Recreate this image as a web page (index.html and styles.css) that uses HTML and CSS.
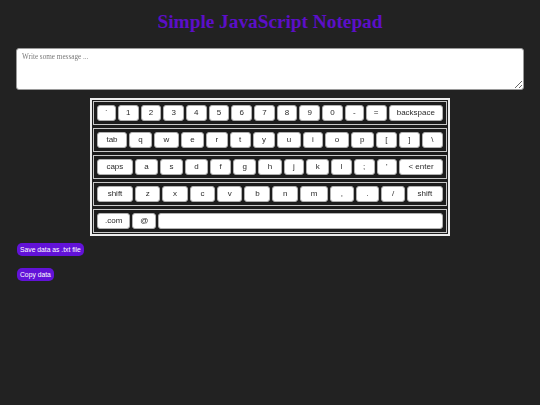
FILE: index.html
```html
<!DOCTYPE html>
<html lang="en">
<head>
<meta charset="utf-8">
<title>Simple JavaScript Notepad</title>
<link rel="stylesheet" href="styles.css">
</head>
<body>
<h1 class="title">Simple JavaScript Notepad</h1>
<textarea class="note" placeholder="Write some message ..."></textarea>
<div class="keyboard">
  <div class="row">
    <button class="key">`</button><button class="key">1</button><button class="key">2</button><button class="key">3</button><button class="key">4</button><button class="key">5</button><button class="key">6</button><button class="key">7</button><button class="key">8</button><button class="key">9</button><button class="key">0</button><button class="key">-</button><button class="key">=</button><button class="key">backspace</button>
  </div>
  <div class="row">
    <button class="key">tab</button><button class="key">q</button><button class="key">w</button><button class="key">e</button><button class="key">r</button><button class="key">t</button><button class="key">y</button><button class="key">u</button><button class="key">i</button><button class="key">o</button><button class="key">p</button><button class="key">[</button><button class="key">]</button><button class="key">\</button>
  </div>
  <div class="row">
    <button class="key">caps</button><button class="key">a</button><button class="key">s</button><button class="key">d</button><button class="key">f</button><button class="key">g</button><button class="key">h</button><button class="key">j</button><button class="key">k</button><button class="key">l</button><button class="key">;</button><button class="key">'</button><button class="key">&lt; enter</button>
  </div>
  <div class="row">
    <button class="key">shift</button><button class="key">z</button><button class="key">x</button><button class="key">c</button><button class="key">v</button><button class="key">b</button><button class="key">n</button><button class="key">m</button><button class="key">,</button><button class="key">.</button><button class="key">/</button><button class="key">shift</button>
  </div>
  <div class="row">
    <button class="key key-fixed">.com</button><button class="key key-fixed">@</button><button class="key key-space"></button>
  </div>
</div>
<button class="action action-save">Save data as .txt file</button>
<button class="action action-copy">Copy data</button>
</body>
</html>
```

FILE: styles.css
```css
html, body {
  margin: 0;
  padding: 0;
  background: #222222;
}

body {
  font-family: "Liberation Sans", Arial, sans-serif;
}

.title {
  margin: 0;
  padding-top: 11px;
  line-height: 22px;
  text-align: center;
  font-family: "Liberation Serif", "Times New Roman", serif;
  font-weight: bold;
  font-size: 19.3px;
  color: #5c0fc8;
}

.note {
  display: block;
  box-sizing: border-box;
  margin: 15px 16px 0 16px;
  width: calc(100% - 32px);
  height: 42px;
  padding: 4px 5px;
  border: 1px solid #9a9a9a;
  border-radius: 3px;
  background: #ffffff;
  font-family: "Liberation Serif", "Times New Roman", serif;
  font-size: 7.2px;
  color: #222;
  resize: both;
  will-change: transform;
}

.note::placeholder {
  color: #7a7a7a;
}

.keyboard {
  box-sizing: border-box;
  width: 360px;
  margin: 8px auto 0 auto;
  border: 2px solid #ececec;
  padding: 1px;
  background: #1c1c1c;
  display: flex;
  flex-direction: column;
  gap: 3px;
  will-change: transform;
}

.row {
  display: flex;
  gap: 2px;
  border: 1px solid #c8c8c8;
  padding: 3px;
}

.key {
  flex: 1 1 auto;
  box-sizing: border-box;
  height: 16px;
  margin: 0;
  padding: 0 7px;
  border: 1px solid #b0b0b0;
  border-radius: 3px;
  background: #ffffff;
  color: #2a2a2a;
  font-family: "Liberation Sans", Arial, sans-serif;
  font-size: 8px;
  line-height: 14px;
  white-space: nowrap;
}

.key-fixed {
  flex: 0 0 auto;
}

.key-space {
  flex: 1 1 auto;
}

.action {
  display: block;
  box-sizing: border-box;
  margin: 7px 0 0 17px;
  height: 13px;
  padding: 0 3px;
  border: none;
  border-radius: 5px;
  background: #6212d8;
  color: #ffffff;
  font-family: "Liberation Sans", Arial, sans-serif;
  font-size: 6.75px;
  line-height: 13px;
}

.action-copy {
  margin-top: 12px;
}
```
